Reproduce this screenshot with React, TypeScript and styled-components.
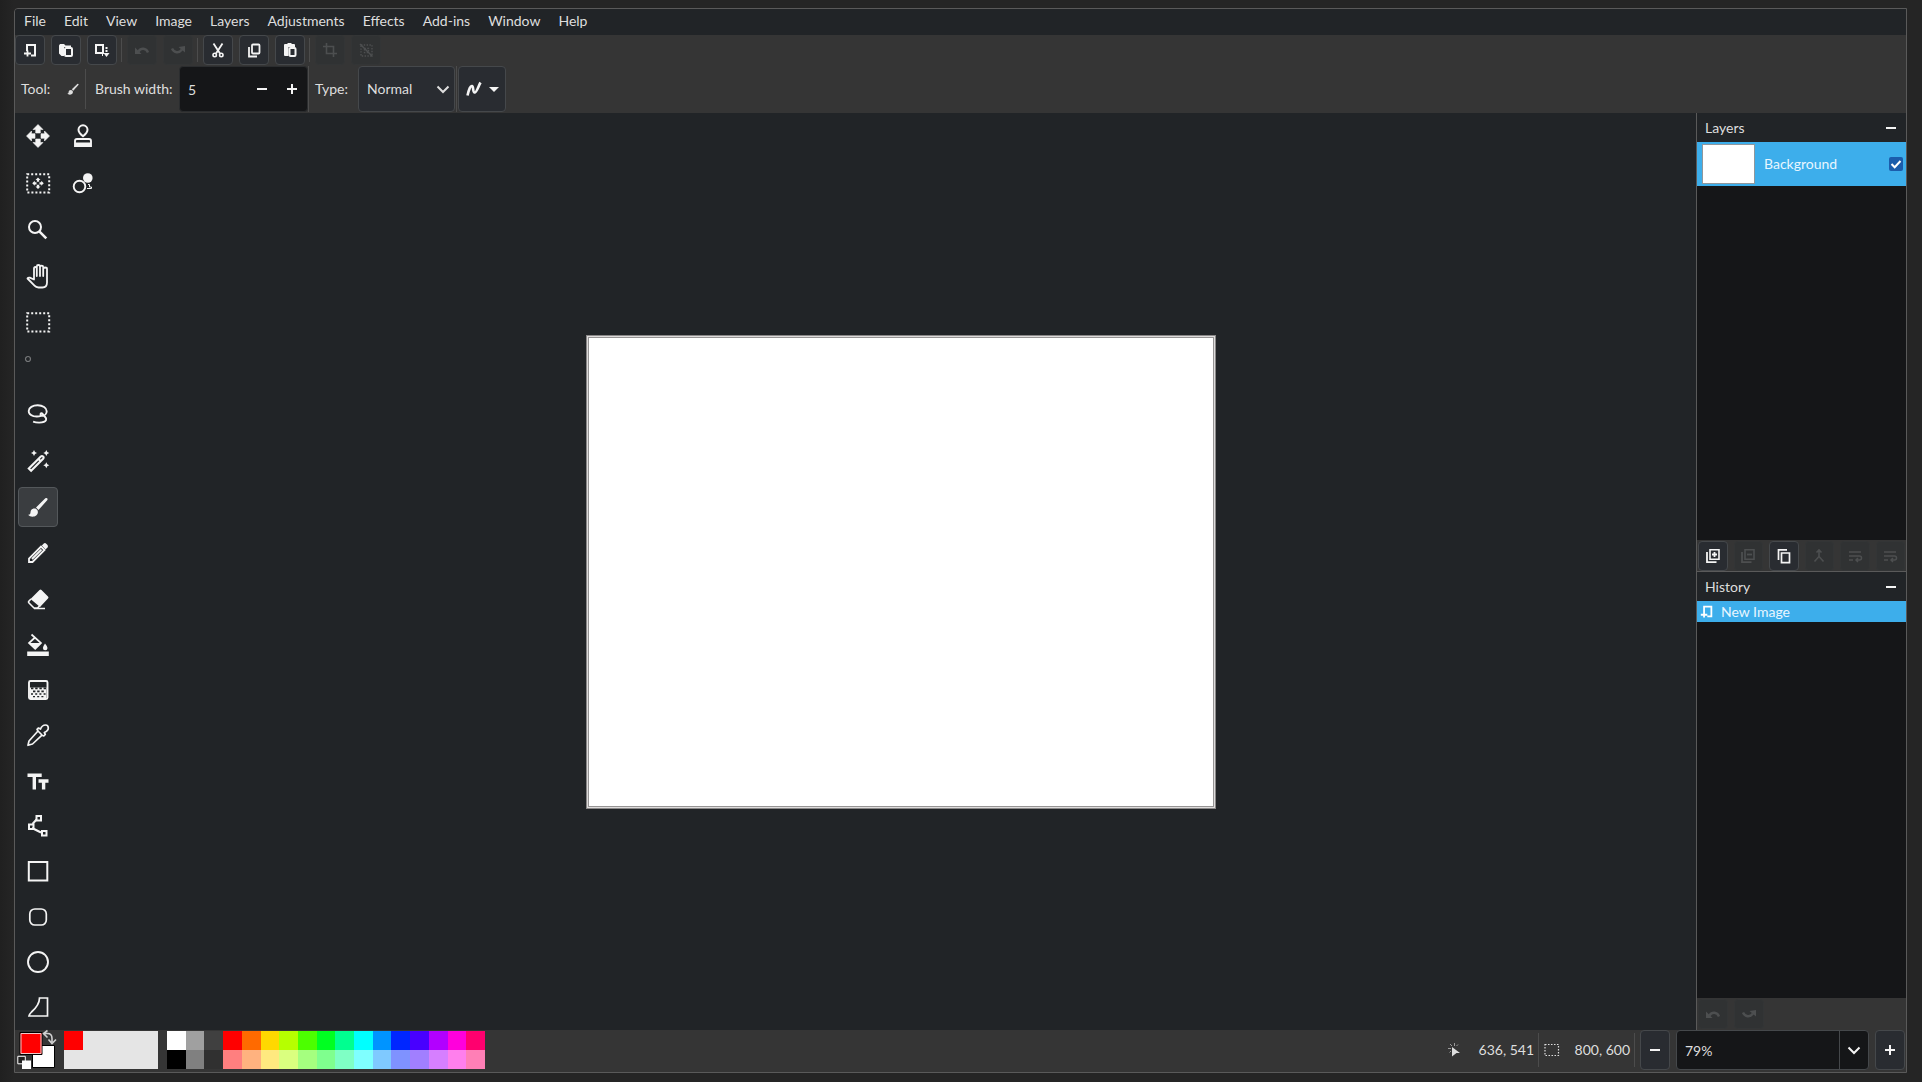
import React from "react";
import styled, { createGlobalStyle } from "styled-components";

const color = {
  desk: "#252525",
  chrome: "#353535",
  panel: "#212427",
  well: "#151618",
  button: "#292c31",
  edge: "#45484b",
  frame: "#5a5a5a",
  line: "#4c4c4c",
  text: "#dedede",
  icon: "#f4f4f4",
  accent: "#3daeeb",
};

const GlobalStyle = createGlobalStyle`
  * { box-sizing: border-box; }
  body { margin: 0; background: ${color.desk}; }
  body, button, input, select {
    font-family: Lato, "Noto Sans", sans-serif;
    font-size: 14px;
    line-height: 20px;
    color: ${color.text};
  }
  button { padding: 0; margin: 0; border: 0; background: none; }
  svg { display: block; flex: none; overflow: visible; }
`;

const Desktop = styled.div`
  min-height: 100vh;
  display: flex;
  padding: 8px 15px 9px 14px;
  background: linear-gradient(90deg, #202020, ${color.desk} 14px);
`;

const Frame = styled.div`
  flex: 1;
  min-width: 0;
  display: flex;
  flex-direction: column;
  border: 1px solid ${color.frame};
  border-top-left-radius: 4px;
  background: ${color.chrome};
  overflow: hidden;
`;

const MenuBar = styled.nav`
  display: flex;
  align-items: flex-start;
  height: 26px;
  padding-top: 2px;
  background: ${color.panel};
`;

const MenuItem = styled.button`
  padding: 0 9px;
`;

const ActionBar = styled.div`
  display: flex;
  align-items: center;
  height: 30px;
`;

const Group = styled.div`
  display: flex;
  align-items: center;
  gap: 6px;
`;

const Divider = styled.span<{ $h: number; $before?: number; $after?: number }>`
  width: 1px;
  height: ${(p) => p.$h}px;
  margin: 0 ${(p) => p.$after ?? 5}px 0 ${(p) => p.$before ?? 4}px;
  background: ${color.line};
`;

const IconButton = styled.button<{ $h?: number }>`
  display: flex;
  align-items: center;
  justify-content: center;
  width: 30px;
  height: ${(p) => p.$h ?? 30}px;
  border: 1px solid ${color.edge};
  border-radius: 4px;
  background: ${color.button};
  color: ${color.icon};
  &:disabled {
    background: #303233;
    border-color: #333536;
    color: #4d4f50;
  }
`;

const OptionBar = styled.div`
  display: flex;
  align-items: center;
  height: 48px;
  padding-left: 6px;
`;

const Label = styled.label<{ $w: number }>`
  width: ${(p) => p.$w}px;
  white-space: nowrap;
`;

const Spin = styled.div`
  display: flex;
  align-items: center;
  width: 129px;
  height: 46px;
  border: 1px solid #2b2d2f;
  border-radius: 4px;
  background: ${color.well};
`;

const Field = styled.input`
  flex: 1;
  min-width: 0;
  height: 100%;
  padding: 0 8px;
  border: 0;
  background: transparent;
`;

const SpinButton = styled.button`
  display: flex;
  align-items: center;
  justify-content: center;
  width: 30px;
  height: 100%;
  color: ${color.icon};
`;

const SelectBox = styled.div`
  display: grid;
  grid-template-columns: 1fr;
  align-items: center;
  width: 97px;
  height: 46px;
  > * { grid-area: 1 / 1; }
  > svg { justify-self: end; margin-right: 5px; pointer-events: none; }
`;

const Select = styled.select`
  appearance: none;
  width: 100%;
  height: 100%;
  padding: 0 24px 0 8px;
  border: 1px solid ${color.edge};
  border-radius: 4px;
  background: ${color.button};
`;

const CurveButton = styled(IconButton)`
  width: 48px;
  gap: 7px;
`;

const Workspace = styled.div`
  flex: 1;
  min-height: 0;
  display: flex;
  background: ${color.panel};
`;

const Toolbox = styled.div`
  display: grid;
  grid-template-columns: 45px 45px;
  grid-template-rows: repeat(10, 93fr) repeat(10, 91fr);
  grid-auto-flow: column;
  place-items: center;
`;

const ToolButton = styled.button<{ $active?: boolean }>`
  display: flex;
  align-items: center;
  justify-content: center;
  width: 40px;
  height: 40px;
  border-radius: 4px;
  border: 1px solid ${(p) => (p.$active ? "#54585b" : "transparent")};
  background: ${(p) => (p.$active ? "#3a3d40" : "transparent")};
  color: ${color.icon};
`;

const Stage = styled.main`
  flex: 1;
  display: flex;
  align-items: center;
  justify-content: center;
`;

const Paper = styled.div`
  width: 630px;
  aspect-ratio: 630 / 474;
  background: #fff;
  border: 1px solid #8a8888;
  box-shadow: inset 0 0 0 1px #dddbdb, inset 0 0 0 2px #969494;
`;

const Sidebar = styled.aside`
  display: flex;
  flex-direction: column;
  width: 210px;
  border-left: 1px solid ${color.frame};
`;

const PanelHead = styled.header`
  display: flex;
  align-items: center;
  justify-content: space-between;
  height: 29px;
  padding: 0 9px 0 8px;
`;

const MinimizeButton = styled.button`
  display: flex;
  color: ${color.icon};
`;

const List = styled.div<{ $grow: number }>`
  flex: ${(p) => p.$grow} 1 0;
  background: ${color.well};
`;

const LayerRow = styled.label`
  display: flex;
  align-items: center;
  height: 44px;
  padding: 0 3px 0 5px;
  background: ${color.accent};
  color: #e8f6ff;
`;

const Thumb = styled.span`
  width: 53px;
  height: 40px;
  margin-right: 9px;
  border: 1px solid #8f979c;
  background: #fff;
`;

const LayerName = styled.span`
  flex: 1;
`;

const CheckWrap = styled.span`
  display: grid;
  place-items: center;
  > * { grid-area: 1 / 1; }
  > svg { pointer-events: none; }
`;

const Check = styled.input`
  appearance: none;
  width: 14px;
  height: 14px;
  margin: 0;
  border-radius: 2px;
  background: #1b5dac;
`;

const HistoryRow = styled.button`
  display: flex;
  align-items: center;
  gap: 8px;
  width: 100%;
  height: 21px;
  padding: 0 3px;
  background: ${color.accent};
  color: #e8f6ff;
`;

const PanelTools = styled.div<{ $ruled?: boolean }>`
  display: flex;
  align-items: center;
  gap: 6px;
  height: 32px;
  padding: 0 1px;
  background: ${color.chrome};
  border-bottom: ${(p) => (p.$ruled ? `1px solid ${color.frame}` : "0")};
`;

const StatusBar = styled.footer`
  display: flex;
  align-items: center;
  height: 42px;
  padding: 0 1px 2px 2px;
`;

const SwatchButton = styled.button`
  width: 40px;
  height: 40px;
  margin-right: 7px;
`;

const Recent = styled.div`
  width: 94px;
  height: 38px;
  margin-right: 9px;
  background: #e5e5e5;
`;

const Swatch = styled.button<{ $c: string }>`
  display: block;
  width: 100%;
  height: 19px;
  background: ${(p) => p.$c};
`;

const RecentSlot = styled.div`
  width: 19px;
`;

const Palette = styled.div`
  display: grid;
  grid-template-columns: repeat(17, 1fr);
  width: 318px;
`;

const Spacer = styled.div`
  flex: 1;
`;

const Readout = styled.span`
  display: flex;
  align-items: center;
  justify-content: space-between;
  width: 86px;
`;

const ZoomBox = styled.div`
  display: flex;
  width: 193px;
  height: 40px;
  margin: 0 6px;
  border: 1px solid ${color.edge};
  border-radius: 4px;
  background: ${color.well};
`;

const ZoomDrop = styled(SpinButton)`
  width: 29px;
  border-left: 1px solid ${color.edge};
`;

type GlyphProps = { size?: number; children: React.ReactNode; box?: number };
const Glyph = ({ size = 24, box = size, children }: GlyphProps) => (
  <svg
    width={size}
    height={size}
    viewBox={`0 0 ${box} ${box}`}
    fill="none"
    stroke="currentColor"
    strokeWidth="2"
    aria-hidden="true"
  >
    {children}
  </svg>
);

const Minus = () => <Glyph size={12}><path d="M1 6h10" /></Glyph>;
const Plus = () => <Glyph size={12}><path d="M1 6h10M6 1v10" /></Glyph>;
const Chevron = () => <Glyph size={14}><path d="M1.5 4.500 7 10l5.500-5.500" /></Glyph>;

const NewGlyph = () => (
  <Glyph size={16}>
    <path d="M5 9V3h8v10.500H9" />
    <path d="M2 11.500h7M5.500 8.500v6" strokeWidth="1.800" />
  </Glyph>
);
const OpenGlyph = () => (
  <Glyph size={16}>
    <path fill="currentColor" stroke="none" d="M1 3.500 2 2h4l1.500 1.500H13V5H6v9H3.500L1 11.500z" />
    <rect x="7" y="6" width="7" height="8" rx="1" />
  </Glyph>
);
const SaveGlyph = () => (
  <Glyph size={16}>
    <path d="M2 3h7v8H2z" />
    <path d="M12.500 5v7" strokeDasharray="2 1" />
    <path fill="currentColor" stroke="none" d="M9.500 11h6l-3 4zM8 11h1v3H8z" />
  </Glyph>
);
const UndoGlyph = () => (
  <Glyph size={16}>
    <path d="M4.500 9.500C7 5.500 12 6 14 10.500" strokeWidth="2.400" />
    <path fill="currentColor" stroke="none" d="M1 5.500V12h6.500z" />
  </Glyph>
);
const RedoGlyph = () => (
  <Glyph size={16}>
    <path d="M2 6.500c2 4.500 7 5 10 1" strokeWidth="2.400" />
    <path fill="currentColor" stroke="none" d="M15 4v6.500L8.500 5z" />
  </Glyph>
);
const CutGlyph = () => (
  <Glyph size={16}>
    <path d="m3.500 1.500 6.500 10M12.500 1.500 6 11.500" strokeWidth="1.800" />
    <circle cx="4.700" cy="13" r="1.700" strokeWidth="1.600" />
    <circle cx="11.300" cy="13" r="1.700" strokeWidth="1.600" />
  </Glyph>
);
const CopyGlyph = () => (
  <Glyph size={16}>
    <rect x="6" y="2.500" width="7.500" height="9" rx="1" strokeWidth="1.800" />
    <path d="M3 5v9.500h8" strokeWidth="1.800" />
  </Glyph>
);
const PasteGlyph = () => (
  <Glyph size={16}>
    <path fill="currentColor" stroke="none" d="M2 3q0-1 1-1h2.500V1h4v1H12q1 0 1 1v2H6.500v9H3q-1 0-1-1z" />
    <rect x="7.500" y="6" width="6" height="8" rx="1" />
  </Glyph>
);
const CropGlyph = () => (
  <Glyph size={16}><path d="M4.500 1v10.500H15M1 4.500h10.500V15" strokeWidth="1.600" /></Glyph>
);
const DeselectGlyph = () => (
  <Glyph size={16}>
    <path d="M3 3h11v11H3zM6.500 6.500h4v4h-4z" strokeWidth="1.400" strokeDasharray="1.400 1.400" />
    <path d="m2 2 12.500 12.500" strokeWidth="1.400" />
  </Glyph>
);

const BrushShape = () => (
  <g fill="currentColor" stroke="none">
    <path d="m10 12.500 9.300-9.200q1-.8 1.900 0t0 2L12.500 15z" />
    <path d="M8.300 13.600c2 0 3.600 1.400 3.600 3.400 0 3-2.700 4.700-5.400 4.700-1.700 0-3.300-.7-4.500-1.900 1.500 0 2.500-.8 2.500-2.600 0-2 1.700-3.600 3.800-3.600z" />
  </g>
);

const arrows =
  "m12 .5 5 5h-2.700V9H9.700V5.500H7zM12 23.500l5-5h-2.700V15H9.700v3.500H7zM.5 12l5-5v2.700H9v4.600H5.500V17zM23.500 12l-5-5v2.700H15v4.600h3.500V17z";
const Dots = () => (
  <path d="M1.200 3.200h22v18.200h-22z" strokeWidth="2" strokeDasharray="2 2" />
);

const TOOLS: { name: string; art: React.ReactNode; active?: boolean }[] = [
  {
    name: "Move selected pixels",
    art: <path fill="currentColor" stroke="currentColor" strokeWidth=".6" d={arrows} />,
  },
  {
    name: "Move selection",
    art: (
      <>
        <Dots />
        <path fill="currentColor" stroke="none" transform="translate(6 6.300) scale(.5)" d={arrows} />
      </>
    ),
  },
  { name: "Zoom", art: <><circle cx="9" cy="10" r="6" /><path d="m13.300 14.300 7 7" strokeWidth="2.600" /></> },
  {
    name: "Pan",
    art: (
      <path
        d="M8 15.500V5.500q0-1.500 1.400-1.500t1.400 1.500V13 3.500Q10.800 2 12.400 2T14 3.500V13 4q0-1.300 1.600-1.300T17.200 4v9-7q0-1.500 1.900-1.500T21 6v13.500c0 3-1.700 5-4.500 5h-4c-2 0-3-.6-4-1.800l-7-7.200q.6-1.200 2.300-.9L8 16.500z"
        strokeWidth="1.800"
        strokeLinejoin="round"
      />
    ),
  },
  { name: "Rectangle select", art: <Dots /> },
  { name: "Ellipse select", art: <circle cx="2" cy="3" r="2.500" strokeWidth="1.200" opacity=".4" /> },
  {
    name: "Lasso select",
    art: (
      <path
        d="M15 13.800c-2 .7-5 .9-7.500.3C4.500 13.300 2.700 11.400 2.700 9c0-3.400 4-5.700 9-5.700s9 2.500 9 5.900c0 2.500-2 4.600-4.500 4.600-1.700 0-2.400-2.300-.7-2.600 1.300-.2 1.600 1.700 3 3.100 1.500 1.500 2.300 2 1.600 3.600-.8 2-4 2.700-7 2.700-2.700 0-4.600-.4-6-.9"
        strokeWidth="1.900"
      />
    ),
  },
  {
    name: "Magic wand",
    art: (
      <>
        <path d="m2.800 19.500 12-12q1.200-1 2.300 0t0 2.200l-12 12z M12.500 10l2.200 2.200" strokeWidth="2.100" />
        <path fill="currentColor" stroke="none" d="m8 1 1 2 2 1-2 1-1 2-1-2-2-1 2-1zM20.300 1l1 2 2 1-2 1-1 2-1-2-2-1 2-1zM20.300 13.300l1 2 2 1-2 1-1 2-1-2-2-1 2-1z" />
      </>
    ),
  },
  { name: "Paintbrush", art: <BrushShape />, active: true },
  {
    name: "Pencil",
    art: (
      <>
        <path d="M3 21v-3.500L15 5.500 18.500 9l-12 12zM6 18l9.500-9.500" strokeWidth="1.800" />
        <path fill="currentColor" stroke="none" d="m15.800 4.500 2-2Q19 1.500 20.500 3l1 1q1 1.300 0 2.500l-2 2z" />
      </>
    ),
  },
  {
    name: "Eraser",
    art: (
      <>
        <path fill="currentColor" stroke="none" d="m4.500 12 9-9q1-1 2 0l6.500 6.500q1 1 0 2l-8 8.500z" />
        <path d="m5 12-2 2q-1 1 0 2l5 5h3.500l3-3M8 21.500h11" strokeWidth="1.600" />
      </>
    ),
  },
  {
    name: "Paint bucket",
    art: (
      <>
        <path d="m5.500 1.500 9.500 8.500-5.800 5.800L3 10l6-5.500" strokeWidth="1.700" />
        <path fill="currentColor" stroke="none" d="M3 10h12l-6 6zM19 10.500q2.500 3 2.500 4.500a2.300 2.300 0 0 1-4.600 0q0-1.500 2.100-4.500zM1.200 18.500h21.600v4.500H1.200z" />
      </>
    ),
  },
  {
    name: "Gradient",
    art: (
      <>
        <rect x="3" y="3" width="18.500" height="18" rx="1.500" strokeWidth="1.900" />
        <path fill="currentColor" stroke="none" d="M4 9.500h16.500V20H4z" />
        <path stroke={color.panel} d="M5 10.300h15" strokeDasharray="2.400 1.800" strokeWidth="1.700" />
        <path stroke={color.panel} d="M7 13.300h12" strokeDasharray="2.400 1.800" strokeWidth="1.800" />
        <path stroke={color.panel} d="M5 16h15" strokeDasharray="2 2.200" strokeWidth="1.600" />
        <path stroke={color.panel} d="M7 18.600h12" strokeDasharray="2 2.200" strokeWidth="1.400" />
      </>
    ),
  },
  {
    name: "Color picker",
    art: (
      <path
        d="M2 22.300 3 18l9-10-1-1.700 1.500-1.300 2 1C15.500 3.500 17 2 19.500 2c2 0 2.800 1.200 2.800 3 0 2-1.500 3.500-4 4.500l1 2-1.500 1.500-1.800-.8L6.500 21zM12 8l4 4"
        strokeWidth="1.700"
        strokeLinejoin="round"
      />
    ),
  },
  {
    name: "Text",
    art: <path d="M1.500 6.200h14.200M8.300 6v14.500M12.500 12h10M17.600 12v8.500" strokeWidth="3.400" />,
  },
  {
    name: "Line / curve",
    art: (
      <>
        <path d="M10.500 5.500 6.500 10M6 14l9 4.500" />
        <path d="M10.500 2h4.500v4.500h-4.500zM3 10.500h4.500V15H3zM16 17h4.500v4.500H16z" strokeWidth="2" />
      </>
    ),
  },
  { name: "Rectangle", art: <path d="M2.800 3h18.500v18.500H2.800z" /> },
  { name: "Rounded rectangle", art: <rect x="3.800" y="4" width="16.500" height="16" rx="5" strokeWidth="1.700" /> },
  { name: "Ellipse", art: <circle cx="12" cy="12" r="10" strokeWidth="1.900" /> },
  { name: "Freeform shape", art: <path d="M13.500 3h8v18h-18.500q.5-2 2.500-4 8-7 8-14z" strokeWidth="1.700" /> },
  {
    name: "Clone stamp",
    art: (
      <>
        <path d="M12 12.200C9 10 7.500 8.200 7.500 5.800a4.500 4.500 0 0 1 9 0c0 2.400-1.500 4.200-4.500 6.400z" strokeWidth="2" />
        <path d="M4 22v-5q0-2 2-2h12q2 0 2 2v5z" strokeWidth="1.900" />
        <path fill="currentColor" stroke="none" d="M4 18.500h16V22H4z" />
      </>
    ),
  },
  {
    name: "Recolor",
    art: (
      <>
        <circle cx="8.500" cy="15.500" r="5.800" strokeWidth="1.900" />
        <circle cx="16.800" cy="7" r="4.800" fill="currentColor" stroke="none" />
        <path d="M17 13.500h1.500v2.500h2v1.500H16" strokeWidth="1" />
      </>
    ),
  },
];

const LayersCopy = ({ plus }: { plus?: boolean }) => (
  <Glyph size={16}>
    <path d="M5 1.800h9v9.500H5z" strokeWidth="1.600" />
    <path d="M2 4v10.200h9.500" strokeWidth="1.800" />
    <path d={plus ? "M7 6.500h5M9.500 4v5" : "M7 6.500h5"} strokeWidth="1.800" />
  </Glyph>
);
const DuplicateGlyph = () => (
  <Glyph size={16}>
    <path d="M5.500 5h8v9.700h-8z" strokeWidth="1.700" />
    <path d="M2.500 12V1.800h8.500" strokeWidth="1.700" />
  </Glyph>
);
const MergeGlyph = () => (
  <Glyph size={16}><path d="M8 2v6.500l-4.500 5M8 8.500l4.500 5M5.500 4.500 8 2l2.500 2.500" strokeWidth="1.600" /></Glyph>
);
const ReorderGlyph = () => (
  <Glyph size={16}>
    <path d="M2 4h12M2 8h10.500q2 0 2 2t-2 2H9.500M2 12h4M11 10l-2 2 2 2" strokeWidth="1.500" />
  </Glyph>
);

const MENUS = ["File", "Edit", "View", "Image", "Layers", "Adjustments", "Effects", "Add-ins", "Window", "Help"];

const PALETTE = [
  "#ffffff", "#a0a0a0", "#404040", "#ff0000", "#ff6a00", "#ffd800", "#b6ff00", "#4cff00", "#00ff21",
  "#00ff90", "#00ffff", "#0094ff", "#0026ff", "#4800ff", "#b200ff", "#ff00dc", "#ff006e",
  "#000000", "#808080", "#303030", "#ff7f7f", "#ffb27f", "#ffe97f", "#daff7f", "#a5ff7f", "#7fff8e",
  "#7fffc5", "#7fffff", "#7fc9ff", "#7f92ff", "#a17fff", "#d67fff", "#ff7fed", "#ff7fb6",
];

export default function App() {
  return (
    <>
      <GlobalStyle />
      <Desktop>
        <Frame>
          <MenuBar>
            {MENUS.map((m) => (
              <MenuItem key={m}>{m}</MenuItem>
            ))}
          </MenuBar>

          <ActionBar>
            <Group>
              <IconButton aria-label="New"><NewGlyph /></IconButton>
              <IconButton aria-label="Open"><OpenGlyph /></IconButton>
              <IconButton aria-label="Save"><SaveGlyph /></IconButton>
            </Group>
            <Divider $h={24} />
            <Group>
              <IconButton aria-label="Undo" disabled><UndoGlyph /></IconButton>
              <IconButton aria-label="Redo" disabled><RedoGlyph /></IconButton>
            </Group>
            <Divider $h={24} />
            <Group>
              <IconButton aria-label="Cut"><CutGlyph /></IconButton>
              <IconButton aria-label="Copy"><CopyGlyph /></IconButton>
              <IconButton aria-label="Paste"><PasteGlyph /></IconButton>
            </Group>
            <Divider $h={24} />
            <Group>
              <IconButton aria-label="Crop to selection" disabled><CropGlyph /></IconButton>
              <IconButton aria-label="Deselect" disabled><DeselectGlyph /></IconButton>
            </Group>
          </ActionBar>

          <OptionBar>
            <Label as="span" $w={45}>Tool:</Label>
            <Glyph size={14} box={24}><BrushShape /></Glyph>
            <Divider $h={40} $before={5} $after={9} />
            <Label htmlFor="brush-width" $w={84}>Brush width:</Label>
            <Spin>
              <Field id="brush-width" defaultValue="5" />
              <SpinButton aria-label="Decrease brush width"><Minus /></SpinButton>
              <SpinButton aria-label="Increase brush width"><Plus /></SpinButton>
            </Spin>
            <Divider $h={46} $before={0} $after={6} />
            <Label htmlFor="brush-type" $w={43}>Type:</Label>
            <SelectBox>
              <Select id="brush-type" defaultValue="Normal">
                <option>Normal</option>
              </Select>
              <Chevron />
            </SelectBox>
            <Divider $h={46} $before={1} $after={1} />
            <CurveButton $h={46} aria-label="Antialiasing">
              <Glyph size={16}>
                <path d="M1.500 14.500C3 8 4.500 4.500 6 5c1.800.6.500 6 2.500 6.500S12 6 14.500 1.500" strokeWidth="2.600" />
              </Glyph>
              <Glyph size={10}><path fill="currentColor" stroke="none" d="M0 3h10L5 8z" /></Glyph>
            </CurveButton>
          </OptionBar>

          <Workspace>
            <Toolbox>
              {TOOLS.map((t) => (
                <ToolButton key={t.name} aria-label={t.name} $active={t.active}>
                  <Glyph>{t.art}</Glyph>
                </ToolButton>
              ))}
            </Toolbox>
            <Stage>
              <Paper />
            </Stage>
            <Sidebar>
              <PanelHead>
                Layers
                <MinimizeButton aria-label="Minimize layers"><Minus /></MinimizeButton>
              </PanelHead>
              <List $grow={398}>
                <LayerRow>
                  <Thumb />
                  <LayerName>Background</LayerName>
                  <CheckWrap>
                    <Check type="checkbox" defaultChecked />
                    <Glyph size={12}><path stroke="#fff" d="m1.500 6 3.200 3.200L10.500 3" /></Glyph>
                  </CheckWrap>
                </LayerRow>
              </List>
              <PanelTools $ruled>
                <IconButton aria-label="Add layer"><LayersCopy plus /></IconButton>
                <IconButton aria-label="Delete layer" disabled><LayersCopy /></IconButton>
                <IconButton aria-label="Duplicate layer"><DuplicateGlyph /></IconButton>
                <IconButton aria-label="Merge layer down" disabled><MergeGlyph /></IconButton>
                <IconButton aria-label="Move layer up" disabled><ReorderGlyph /></IconButton>
                <IconButton aria-label="Move layer down" disabled><ReorderGlyph /></IconButton>
              </PanelTools>
              <PanelHead>
                History
                <MinimizeButton aria-label="Minimize history"><Minus /></MinimizeButton>
              </PanelHead>
              <List $grow={397}>
                <HistoryRow>
                  <Glyph size={13} box={16}>
                    <path d="M5 9V2h9v12H9M1 12h8M5 8.500v7" stroke="#fff" strokeWidth="2.200" />
                  </Glyph>
                  New Image
                </HistoryRow>
              </List>
              <PanelTools>
                <IconButton aria-label="Undo step" disabled><UndoGlyph /></IconButton>
                <IconButton aria-label="Redo step" disabled><RedoGlyph /></IconButton>
              </PanelTools>
            </Sidebar>
          </Workspace>

          <StatusBar>
            <SwatchButton aria-label="Primary and secondary color">
              <svg width="42" height="40" viewBox="0 0 42 40" fill="none" aria-hidden="true">
                <path d="M15.500 15.500h22v22h-22z" fill="#fff" stroke="#000" />
                <path d="M3 2.500h22v22H3z" fill="#f00" stroke="#000" />
                <path d="M4 3.500h20v20H4z" stroke="#f0c8c8" />
                <path d="M27.500 3.500h3q4.500 0 4.500 5v3.500M30.500.5l-4 3 4 4M31.500 9.500l3.500 4 4-4" stroke="#d0d0d0" strokeWidth="1.600" />
                <path d="M.8 26.300h7.500v7.500H.8z" fill="#222" stroke="#fff" />
                <path d="M5 30.500h9V39H5z" fill="#fff" />
              </svg>
            </SwatchButton>
            <Recent>
              <RecentSlot>
                <Swatch $c="#ff0000" aria-label="Recent color" />
              </RecentSlot>
            </Recent>
            <Palette>
              {PALETTE.map((c) => (
                <Swatch key={c} $c={c} aria-label={c} />
              ))}
            </Palette>
            <Spacer />
            <Readout>
              <Glyph size={14}>
                <path d="M4 3 2 1M3 5.500H0M6.500 3V0M8.500 3l1.500-1.500M3 8l-1.500 1.500" strokeWidth="1" opacity=".6" />
                <path fill="currentColor" stroke="none" d="m4 4 8 6H8.500L4 13.500z" />
              </Glyph>
              636, 541
            </Readout>
            <Divider $h={34} />
            <Readout>
              <Glyph size={16}>
                <path d="M1 2.500h13.500v11H1z" strokeWidth="1.200" strokeDasharray="1.500 1.500" />
              </Glyph>
              800, 600
            </Readout>
            <Divider $h={34} />
            <IconButton $h={40} aria-label="Zoom out"><Minus /></IconButton>
            <ZoomBox>
              <Field aria-label="Zoom level" defaultValue="79%" />
              <ZoomDrop aria-label="Zoom presets"><Chevron /></ZoomDrop>
            </ZoomBox>
            <IconButton $h={40} aria-label="Zoom in"><Plus /></IconButton>
          </StatusBar>
        </Frame>
      </Desktop>
    </>
  );
}
